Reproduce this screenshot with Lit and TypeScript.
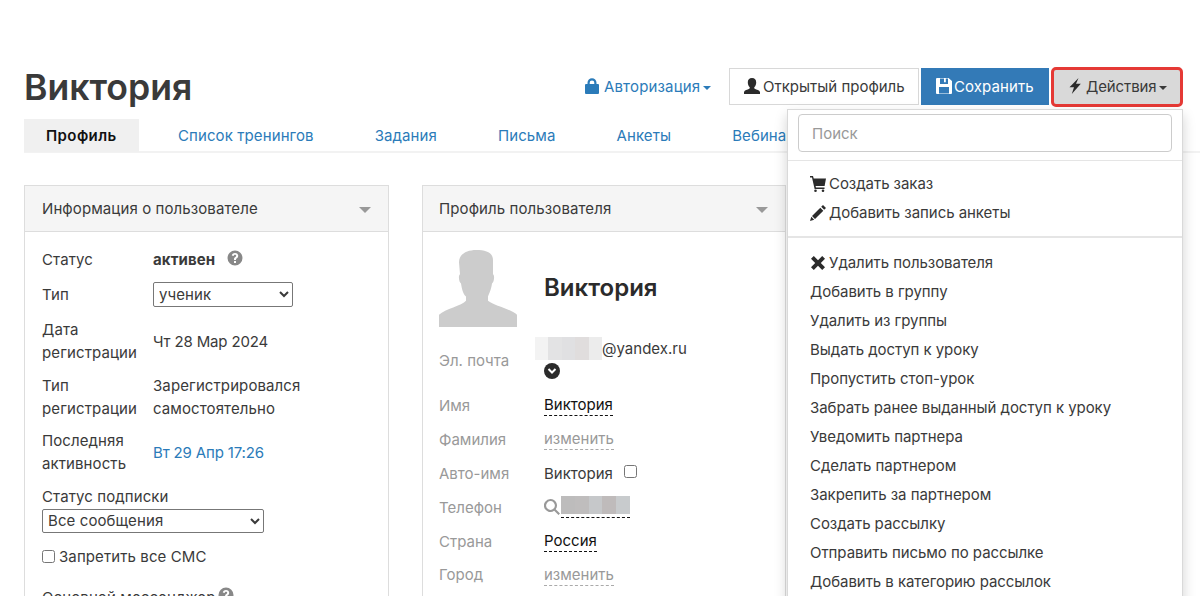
import { LitElement, html, css, svg } from "lit"
import { customElement } from "lit/decorators.js"

const icon = (name: string, size = 16) => html`<svg class="ic" width=${size} height=${size} viewBox="0 0 16 16" fill="currentColor">${paths[name]}</svg>`

const paths: Record<string, unknown> = {
   lock: svg`<path d="M3.500 6.500V4.800a4.500 4.500 0 0 1 9 0v1.700h-2.200V4.800a2.300 2.300 0 0 0-4.600 0v1.700zM2 6h12a1 1 0 0 1 1 1v8a1 1 0 0 1-1 1H2a1 1 0 0 1-1-1V7a1 1 0 0 1 1-1z"/>`,
   user: svg`<path d="M8 0c2.800 0 4.200 1.700 4.200 4.200 0 1.900-.7 3.800-1.700 4.900-.5.6-.4 1.300.2 1.600 1.900 1 4.800 1.300 5.300 3.300V16H0v-2c.5-2 3.400-2.300 5.300-3.300.6-.3.7-1 .2-1.600-1-1.100-1.700-3-1.700-4.900C3.800 1.700 5.200 0 8 0z"/>`,
   save: svg`<path fill-rule="evenodd" d="M1 0h11.500L16 3v12a1 1 0 0 1-1 1H1a1 1 0 0 1-1-1V1a1 1 0 0 1 1-1zM4 .5v5.500h8V.5H9.800v3.800H8V.5zM3 9v6.500h10V9z"/>`,
   bolt: svg`<path d="M11.500 0 2.500 9.200h4.500L4.800 16l9-10.200H9z"/>`,
   cart: svg`<path d="M0 0h3l.7 2.500H16l-1.400 7.500H5.600l.4 1.600h8.500V13H4.600L2 1.500H0z"/><circle cx="5.500" cy="14.700" r="1.300"/><circle cx="13" cy="14.700" r="1.300"/>`,
   pencil: svg`<path d="M13 0l3 3-1.800 1.800-3-3zM10.300 2.700l3 3-8.300 8.300-3-3zM1.300 11.800l2.900 2.900L0 16z"/>`,
   remove: svg`<path d="M3.800 1 8 5.200 12.200 1l2.800 2.800L10.800 8l4.200 4.200-2.800 2.800L8 10.800 3.800 15 1 12.200 5.200 8 1 3.800z"/>`,
   search: svg`<path fill-rule="evenodd" d="M6.500 0a6.500 6.500 0 0 1 5.200 10.300l4.300 4.300-1.500 1.400-4.300-4.200A6.500 6.500 0 1 1 6.500 0zm0 2.100a4.400 4.400 0 1 0 0 8.800 4.400 4.400 0 0 0 0-8.800z"/>`,
   help: svg`<path fill-rule="evenodd" d="M8 .5a7.500 7.500 0 1 1 0 15 7.500 7.500 0 0 1 0-15zM7 11v2h2v-2zM8 3C6.200 3 5 4 4.800 5.600l1.900.3C6.800 5.200 7.200 4.800 8 4.800c.7 0 1.200.4 1.200 1 0 .5-.3.8-.9 1.200C7.400 7.600 7 8.200 7 9.400V10h2v-.4c0-.6.2-.9.900-1.400.9-.6 1.300-1.300 1.300-2.400C11.200 4.100 9.900 3 8 3z"/>`,
}

const blur = (colors: string[], w: number, h: number) => html`<span class="blur" style="width:${w}px;height:${h}px">${colors.map(c => html`<i style="background:${c}"></i>`)}</span>`

const menuTop = [
   { i: "cart", t: "Создать заказ" },
   { i: "pencil", t: "Добавить запись анкеты" },
]
const menuBottom = [
   "Добавить в группу",
   "Удалить из группы",
   "Выдать доступ к уроку",
   "Пропустить стоп-урок",
   "Забрать ранее выданный доступ к уроку",
   "Уведомить партнера",
   "Сделать партнером",
   "Закрепить за партнером",
   "Создать рассылку",
   "Отправить письмо по рассылке",
   "Добавить в категорию рассылок",
]
const tabs = ["Список тренингов", "Задания", "Письма", "Анкеты", "Вебинары"]

@customElement("app-root")
export class AppRoot extends LitElement {
   render() {
      return html`
         <div class="page">
            <header>
               <h1>Виктория</h1>
               <div class="actions">
                  <a class="auth">${icon("lock", 16)}<span>Авторизация</span><b class="caret"></b></a>
                  <button class="btn open">${icon("user", 16)}Открытый профиль</button>
                  <button class="btn primary">${icon("save", 16)}Сохранить</button>
                  <div class="hl">
                     <button class="btn active">${icon("bolt", 16)}<span>Действия</span><b class="caret"></b></button>
                  </div>
               </div>
            </header>

            <nav>
               <span class="tab on">Профиль</span>
               ${tabs.map(t => html`<a class="tab">${t}</a>`)}
            </nav>

            <div class="cols">
               <section class="panel">
                  <div class="phead">Информация о пользователе<b class="pcaret"></b></div>
                  <div class="pbody left">
                     <div class="row r-status"><span>Статус</span><span class="val"><b>активен</b><span class="help">${icon("help", 16)}</span></span></div>
                     <div class="row r-type"><span>Тип</span><select class="s-type"><option>ученик</option></select></div>
                     <div class="row"><span>Дата регистрации</span><span class="date">Чт 28 Мар 2024</span></div>
                     <div class="row"><span>Тип регистрации</span><span>Зарегистрировался самостоятельно</span></div>
                     <div class="row"><span>Последняя активность</span><a class="date">Вт 29 Апр 17:26</a></div>
                     <div class="sub">Статус подписки</div>
                     <select class="s-sub"><option>Все сообщения</option></select>
                     <label class="chk"><input type="checkbox" />Запретить все СМС</label>
                     <div class="msg">Основной мессенджер <span class="help">${icon("help", 16)}</span></div>
                  </div>
               </section>

               <section class="panel second">
                  <div class="phead">Профиль пользователя<b class="pcaret"></b></div>
                  <div class="pbody right">
                     <div class="who">
                        <svg class="avatar" width="78" height="77" viewBox="0 0 78 76" preserveAspectRatio="none" fill="#cccccc"><path d="M37 0C48 0 54 3 54 10L54 24C56 25 55 32 53 33C52 40 50 43 49 46L49 50C55 55 72 58 78 64L78 76L0 76L0 64C6 58 23 55 27 50L27 46C24 43 23 39 22 33C20 32 19 25 21 24L20 12C20 4 28 0 37 0Z"/></svg>
                        <h2>Виктория</h2>
                     </div>
                     <div class="frow mail">
                        <span class="lab">Эл. почта</span>
                        <span class="mailval">
                           <span class="mailline">${blur(["#f3f3f3", "#e3e3e4", "#e0e0e2", "#e0dddd", "#ececec"], 67, 23)}@yandex.ru</span>
                           <span class="more"><svg width="10" height="8" viewBox="0 0 10 8" fill="none" stroke="#fff" stroke-width="2"><path d="M1.500 2 5 5.500 8.500 2"/></svg></span>
                        </span>
                     </div>
                     <div class="frow"><span class="lab">Имя</span><span class="dash">Виктория</span></div>
                     <div class="frow"><span class="lab">Фамилия</span><span class="dash mute">изменить</span></div>
                     <div class="frow"><span class="lab">Авто-имя</span><span>Виктория</span><input class="auto" type="checkbox" /></div>
                     <div class="frow"><span class="lab">Телефон</span><span class="ph">${icon("search", 16)}<span class="dash nop">${blur(["#bdbcbc", "#bfbdbd", "#c6c8ca", "#bfbbbb", "#c8cbcd"], 69, 18)}</span></span></div>
                     <div class="frow"><span class="lab">Страна</span><span class="dash">Россия</span></div>
                     <div class="frow"><span class="lab">Город</span><span class="dash mute">изменить</span></div>
                  </div>
               </section>
            </div>

            <div class="menu">
               <div class="search"><input placeholder="Поиск" /></div>
               <ul class="top">
                  ${menuTop.map(m => html`<li>${icon(m.i, 16)}${m.t}</li>`)}
               </ul>
               <ul>
                  <li>${icon("remove", 16)}Удалить пользователя</li>
                  ${menuBottom.map(t => html`<li>${t}</li>`)}
               </ul>
            </div>
         </div>
      `
   }

   static styles = css`
      :host {
         display: block;
         height: 596px;
         overflow: hidden;
         font-family: "Inter", "Noto Sans", sans-serif;
         font-size: 15px;
         line-height: 22.5px;
         color: #3a3a3a;
         background: #fff;
      }
      * { box-sizing: border-box; }
      .page {
         position: relative;
         width: 1200px;
         height: 596px;
         padding: 68px 0 0 24px;
         overflow: hidden;
      }
      a { color: #2b7bb9; }
      .ic { flex: none; display: inline-block; }

      header {
         display: flex;
         justify-content: space-between;
         align-items: flex-start;
         height: 51px;
      }
      h1 {
         margin: 0;
         font-size: 35.6px;
         line-height: 40px;
         font-weight: 600;
      }
      .actions {
         display: flex;
         align-items: flex-start;
         margin-right: 17px;
      }
      .auth {
         display: flex;
         align-items: center;
         gap: 4px;
         width: 127px;
         height: 37px;
         padding-top: 2px;
         margin-right: 18px;
         letter-spacing: 0.15px;
      }
      .auth .ic { margin-top: -4px; }
      .caret {
         display: inline-block;
         border-top: 4px solid currentColor;
         border-left: 4px solid transparent;
         border-right: 4px solid transparent;
         margin-left: -1px;
      }
      .btn {
         display: flex;
         align-items: center;
         gap: 3px;
         height: 37px;
         padding: 2px 0 0 14px;
         font: inherit;
         color: #3a3a3a;
         background: #fff;
         border: 1px solid #d8d8d8;
         white-space: nowrap;
      }
      .open { width: 190px; }
      .open .ic, .primary .ic { margin-top: -4px; color: #2b2b2b; }
      .primary {
         width: 128px;
         margin-left: 2px;
         gap: 2px;
         letter-spacing: 0.1px;
         color: #fff;
         background: #337ab7;
         border-color: #337ab7;
      }
      .primary .ic { color: #fff; }
      .hl {
         width: 132px;
         height: 40px;
         margin: -1px 0 0 2px;
         border: 3px solid #e53935;
         border-radius: 5px;
         background: #d9d9d9;
      }
      .hl .btn {
         width: 100%;
         height: 100%;
         padding: 1px 0 0 13px;
         letter-spacing: -0.1px;
         border: 0;
         background: none;
      }
      .hl .ic { color: #2b2b2b; margin-top: -3px; }

      nav {
         display: flex;
         gap: 17px;
         height: 34px;
         width: 1176px;
         border-bottom: 2px solid #f2f2f2;
         white-space: nowrap;
         letter-spacing: 0.1px;
      }
      .tab {
         height: 33px;
         padding: 6px 22px 0;
      }
      .tab.on {
         width: 115px;
         background: #f0f0f0;
         color: #111;
         font-weight: 600;
         letter-spacing: 0.4px;
      }

      .cols {
         display: grid;
         grid-template-columns: 365px 364px;
         gap: 33px;
         margin-top: 32px;
      }
      .panel {
         border: 1px solid #ddd;
         height: 500px;
      }
      .phead {
         display: flex;
         justify-content: space-between;
         align-items: center;
         height: 46px;
         padding: 2px 17px 0;
         background: #f5f5f5;
         border-bottom: 1px solid #ddd;
         letter-spacing: 0.1px;
      }
      .second .phead { padding-left: 16px; }
      .pcaret {
         border-top: 6px solid #999;
         border-left: 6px solid transparent;
         border-right: 6px solid transparent;
      }
      .pbody { padding: 16px 17px; line-height: 23px; letter-spacing: 0.1px; }
      .row {
         display: grid;
         grid-template-columns: 111px 1fr;
         align-items: center;
         margin-bottom: 9.500px;
      }
      .r-status { margin-bottom: 11px; }
      .r-type { height: 24px; margin-bottom: 12px; }
      .date { letter-spacing: -0.15px; }
      .val { display: flex; align-items: center; }
      .val b { font-weight: 700; }
      .help { color: #888; margin-left: 12px; }
      .val .help { position: relative; top: 1px; }
      select {
         font: inherit;
         letter-spacing: inherit;
         color: #3a3a3a;
         background: #fff;
         border: 1px solid #777;
         border-radius: 2px;
         height: 25px;
         padding: 0 0 0 1px;
      }
      .s-type { width: 140px; }
      .sub { margin-top: 1px; }
      .s-sub { display: block; width: 222px; height: 24px; margin-top: 1px; }
      .chk {
         display: flex;
         align-items: center;
         gap: 4px;
         margin-top: 12px;
      }
      .chk input { margin: 0; width: 13px; height: 13px; }
      .msg { display: flex; align-items: center; margin-top: 18px; }
      .msg .help { margin-left: 3px; }

      .right { padding: 18px 16px; letter-spacing: 0; }
      .who {
         display: flex;
         align-items: center;
         gap: 27px;
         height: 76px;
      }
      h2 {
         margin: 0 0 2px;
         font-size: 24px;
         font-weight: 600;
         color: #2b2b2b;
      }
      .frow {
         display: flex;
         align-items: center;
         height: 33.900px;
      }
      .lab { width: 105px; color: #999; flex: none; }
      .mail { height: 53px; margin-top: 8px; margin-bottom: 1.500px; }
      .mailval { display: flex; flex-direction: column; align-self: flex-start; margin-top: 2.500px; }
      .mailline { display: flex; align-items: center; margin-left: -9px; }
      .blur { display: inline-flex; }
      .blur i { flex: 1; }
      .more {
         display: flex;
         align-items: center;
         justify-content: center;
         width: 16px;
         height: 16px;
         margin-top: 3px;
         border-radius: 50%;
         background: #2b2b2b;
      }
      .dash {
         color: #111;
         border-bottom: 1px dashed #111;
         line-height: 21px;
      }
      .dash.mute { color: #999; border-color: #aaa; }
      .dash.nop { display: flex; padding-bottom: 3px; line-height: 0; }
      .auto { width: 13px; height: 13px; margin: -4px 0 0 11px; }
      .ph { display: flex; align-items: center; gap: 1px; color: #999; }

      .menu {
         position: absolute;
         left: 787px;
         top: 109px;
         width: 396px;
         height: 520px;
         background: #fff;
         border: 1px solid rgba(0, 0, 0, 0.15);
         box-shadow: 0 6px 12px rgba(0, 0, 0, 0.18);
      }
      .search {
         padding: 4px 10px 8px;
         height: 51px;
         border-bottom: 1px solid #e5e5e5;
      }
      .search input {
         width: 100%;
         height: 38px;
         padding: 0 13px;
         font: inherit;
         border: 1px solid #ccc;
         border-radius: 4px;
      }
      .search input::placeholder { color: #999; }
      ul { list-style: none; margin: 0; padding: 11px 22px 0; letter-spacing: -0.05px; }
      ul.top { height: 77px; padding-top: 9px; border-bottom: 2px solid #e5e5e5; }
      li {
         display: flex;
         align-items: center;
         gap: 3px;
         height: 29px;
         white-space: nowrap;
      }
      li .ic { color: #2b2b2b; margin-top: -2px; }
   `
}
